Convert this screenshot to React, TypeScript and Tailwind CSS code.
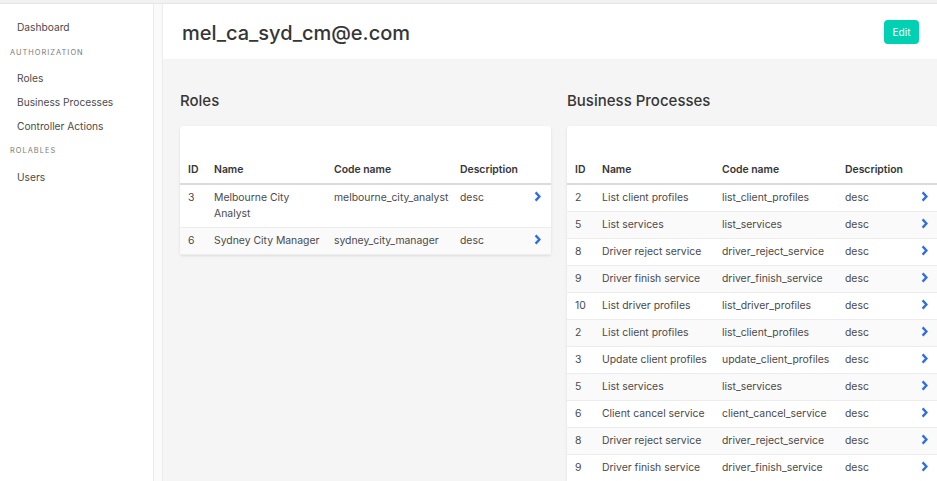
import React from "react";

type Row = { id: number; name: string; code: string; desc: string };

const roles: Row[] = [
  { id: 3, name: "Melbourne City Analyst", code: "melbourne_city_analyst", desc: "desc" },
  { id: 6, name: "Sydney City Manager", code: "sydney_city_manager", desc: "desc" },
];

const processes: Row[] = [
  { id: 2, name: "List client profiles", code: "list_client_profiles", desc: "desc" },
  { id: 5, name: "List services", code: "list_services", desc: "desc" },
  { id: 8, name: "Driver reject service", code: "driver_reject_service", desc: "desc" },
  { id: 9, name: "Driver finish service", code: "driver_finish_service", desc: "desc" },
  { id: 10, name: "List driver profiles", code: "list_driver_profiles", desc: "desc" },
  { id: 2, name: "List client profiles", code: "list_client_profiles", desc: "desc" },
  { id: 3, name: "Update client profiles", code: "update_client_profiles", desc: "desc" },
  { id: 5, name: "List services", code: "list_services", desc: "desc" },
  { id: 6, name: "Client cancel service", code: "client_cancel_service", desc: "desc" },
  { id: 8, name: "Driver reject service", code: "driver_reject_service", desc: "desc" },
  { id: 9, name: "Driver finish service", code: "driver_finish_service", desc: "desc" },
];

const Chevron = () => (
  <svg width="7" height="11" viewBox="0 0 7 11" className="inline-block align-[-1px]">
    <path d="M1.6 1.4 L5.4 5.5 L1.6 9.6" fill="none" stroke="#2f6fdf" strokeWidth="2.4" />
  </svg>
);

function DataTable({ rows, cols }: { rows: Row[]; cols: [number, number, number, number] }) {
  return (
    <div className="bg-white shadow-[0_1px_3px_rgba(10,10,10,0.1)] rounded-[3px] pt-[36px] w-[371px] shrink-0">
      <table className="table-fixed w-full text-[10.4px] leading-4 text-[#4a4a4a]">
        <colgroup>
          <col style={{ width: cols[0] }} />
          <col style={{ width: cols[1] }} />
          <col style={{ width: cols[2] }} />
          <col style={{ width: cols[3] }} />
          <col />
        </colgroup>
        <thead>
          <tr className="border-b-2 border-[#dbdbdb] text-left text-[#363636]">
            <th className="pl-2 pb-[5px] font-semibold">ID</th>
            <th className="pl-2 pb-[5px] font-semibold">Name</th>
            <th className="pl-2 pb-[5px] font-semibold">Code name</th>
            <th className="pl-2 pb-[5px] font-semibold">Description</th>
            <th />
          </tr>
        </thead>
        <tbody>
          {rows.map((r, i) => (
            <tr key={i} className={`border-b border-[#ececec] ${i % 2 === 1 ? "bg-[#fafafa]" : "bg-white"}`}>
              <td className="pl-2 py-[5px] align-top">{r.id}</td>
              <td className="pl-2 pr-[4px] py-[5px] align-top">{r.name}</td>
              <td className="pl-2 py-[5px] align-top whitespace-nowrap">{r.code}</td>
              <td className="pl-2 py-[5px] align-top">{r.desc}</td>
              <td className="py-[5px] pr-[10px] text-right align-top">
                <Chevron />
              </td>
            </tr>
          ))}
        </tbody>
      </table>
    </div>
  );
}

export default function App() {
  return (
    <div
      className="w-[937px] h-[481px] overflow-hidden flex flex-col bg-white"
      style={{ fontFamily: "Inter, 'Noto Sans', sans-serif" }}
    >
      {/* top strip */}
      <div className="h-[4px] bg-[#f2f2f2] border-b border-[#e6e6e6] shrink-0" />
      <div className="flex flex-1 min-h-0">
        {/* Sidebar */}
        <aside className="w-[154px] shrink-0 border-r border-[#ececec] pt-[10px] text-[10.2px] text-[#4a4a4a]">
          <a className="block pl-[17px] leading-[26px]">Dashboard</a>
          <p className="pl-[10px] text-[7.4px] tracking-[0.14em] text-[#7a7a7a] leading-[26px]">AUTHORIZATION</p>
          <ul>
            <li className="pl-[17px] leading-[24px]">Roles</li>
            <li className="pl-[17px] leading-[24px]">Business Processes</li>
            <li className="pl-[17px] leading-[24px]">Controller Actions</li>
          </ul>
          <p className="pl-[10px] text-[7.4px] tracking-[0.14em] text-[#7a7a7a] leading-[26px]">ROLABLES</p>
          <ul>
            <li className="pl-[17px] leading-[26px]">Users</li>
          </ul>
        </aside>
        <div className="w-[9px] shrink-0 bg-[#fafafa] border-r border-[#ececec]" />

        {/* Main */}
        <main className="flex-1 min-w-0 flex flex-col bg-[#f5f5f5]">
          <header className="h-[55px] bg-white flex items-center justify-between pl-[19px] pr-[18px] shrink-0">
            <h1 className="text-[20px] font-medium text-[#363636] mt-[2px]">mel_ca_syd_cm@e.com</h1>
            <button className="bg-[#00d1b2] text-white text-[10px] rounded-[4px] h-[24px] w-[35px] leading-none">
              Edit
            </button>
          </header>

          <div className="flex gap-4 pl-[17px] pt-[32px]">
            <section className="flex flex-col">
              <h2 className="text-[15px] font-medium text-[#363636] leading-5 mb-[15px]">Roles</h2>
              <DataTable rows={roles} cols={[26, 120, 126, 68]} />
            </section>
            <section className="flex flex-col">
              <h2 className="text-[15px] font-medium text-[#363636] leading-5 mb-[15px]">Business Processes</h2>
              <DataTable rows={processes} cols={[27, 120, 123, 68]} />
            </section>
          </div>
        </main>
      </div>
    </div>
  );
}
